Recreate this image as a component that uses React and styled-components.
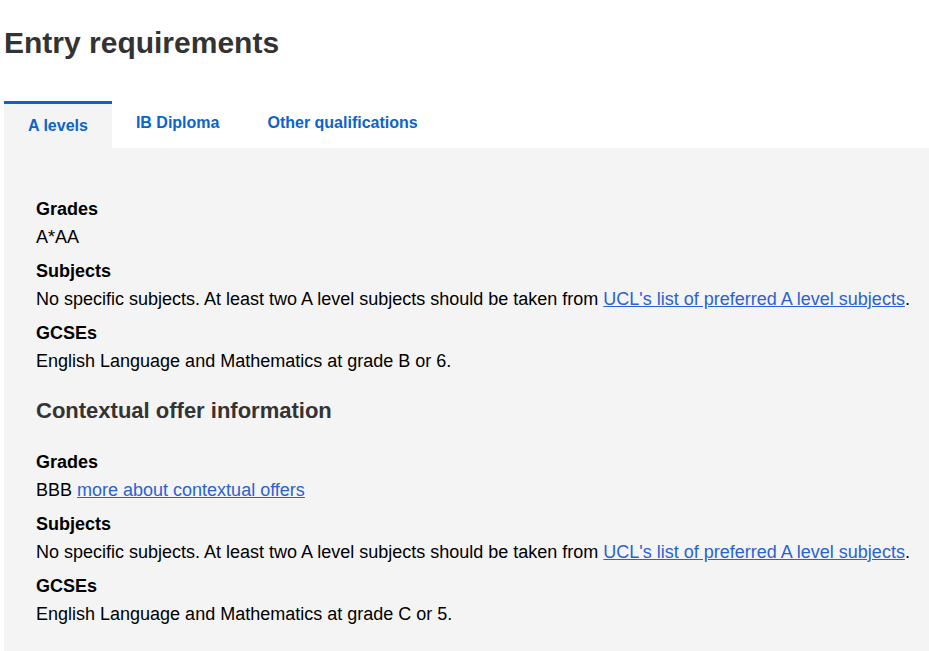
import React, { useState } from "react"
import styled, { createGlobalStyle } from "styled-components"

const GlobalStyle = createGlobalStyle`
    html, body {
        margin: 0;
        padding: 0;
        background: #fff;
    }
    body {
        font-family: "Liberation Sans", Arial, sans-serif;
        color: #000;
    }
`

const Page = styled.div`
    padding: 0 0 0 4px;
`

const Title = styled.h1`
    margin: 0;
    padding-top: 25px;
    font-size: 30px;
    line-height: 36px;
    font-weight: bold;
    color: #333;
`

const TabList = styled.div`
    display: flex;
    align-items: flex-start;
    margin-top: 40px;
`

const Tab = styled.button`
    font-family: inherit;
    font-size: 16px;
    font-weight: bold;
    color: #0b63ce;
    border: 0;
    border-top: 3px solid ${p => (p.$active ? "#0b63ce" : "transparent")};
    background: ${p => (p.$active ? "#f4f4f4" : "transparent")};
    padding: ${p => (p.$active ? "12px 24px 0" : "9px 24px 0")};
    height: 47px;
    line-height: 20px;
    display: flex;
    align-items: flex-start;
    cursor: pointer;
`

const Panel = styled.div`
    background: #f4f4f4;
    padding: 47px 8px 40px 32px;
    min-height: 500px;
`

const List = styled.dl`
    margin: 0;
`

const Term = styled.dt`
    font-weight: bold;
    font-size: 18px;
    line-height: 28px;
`

const Value = styled.dd`
    margin: 0 0 6px;
    font-size: 18px;
    line-height: 28px;
`

const SubTitle = styled.h2`
    margin: 19px 0 0;
    font-size: 22px;
    line-height: 34px;
    font-weight: bold;
    color: #333;
    padding-bottom: 20px;
`

const Link = styled.a`
    color: #2a62d3;
    text-decoration: underline;
`

const tabs = [
    { id: "alevels", label: "A levels" },
    { id: "ib", label: "IB Diploma" },
    { id: "other", label: "Other qualifications" },
]

const preferred = (
    <>
        No specific subjects. At least two A level subjects should be taken from{" "}
        <Link href="#">UCL's list of preferred A level subjects</Link>.
    </>
)

const standard = [
    { term: "Grades", value: "A*AA" },
    { term: "Subjects", value: preferred },
    { term: "GCSEs", value: "English Language and Mathematics at grade B or 6." },
]

const contextual = [
    {
        term: "Grades",
        value: (
            <>
                BBB <Link href="#">more about contextual offers</Link>
            </>
        ),
    },
    { term: "Subjects", value: preferred },
    { term: "GCSEs", value: "English Language and Mathematics at grade C or 5." },
]

function Requirements({ items }) {
    return (
        <List>
            {items.map((item, i) => (
                <React.Fragment key={i}>
                    <Term>{item.term}</Term>
                    <Value>{item.value}</Value>
                </React.Fragment>
            ))}
        </List>
    )
}

export default function App() {
    const [active, setActive] = useState("alevels")

    return (
        <Page>
            <GlobalStyle />
            <Title>Entry requirements</Title>
            <TabList>
                {tabs.map(tab => (
                    <Tab
                        key={tab.id}
                        $active={tab.id === active}
                        onClick={() => setActive(tab.id)}
                    >
                        {tab.label}
                    </Tab>
                ))}
            </TabList>
            <Panel>
                <Requirements items={standard} />
                <SubTitle>Contextual offer information</SubTitle>
                <Requirements items={contextual} />
            </Panel>
        </Page>
    )
}
